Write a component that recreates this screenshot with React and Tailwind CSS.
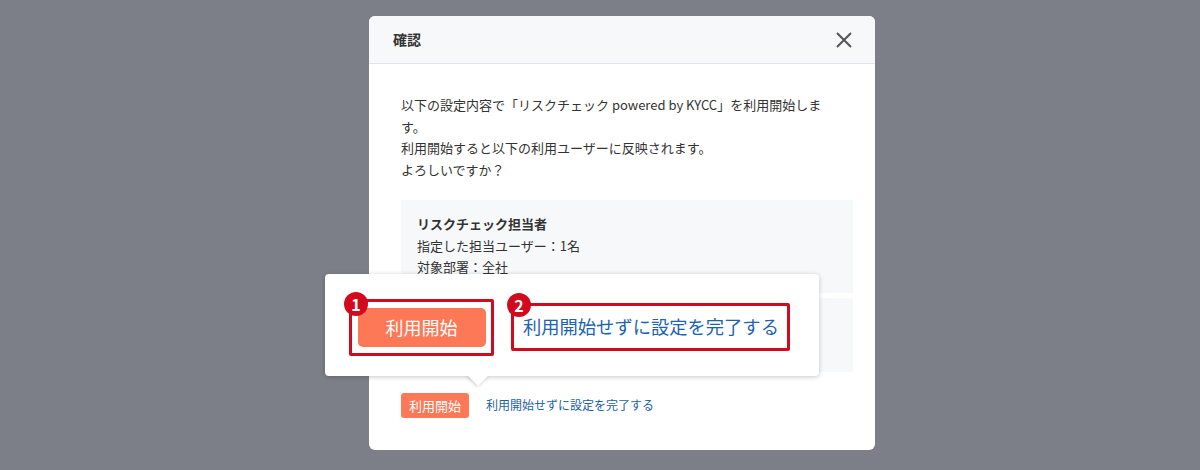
export default function App() {
  const font = { fontFamily: '"Noto Sans CJK JP", "Noto Sans", sans-serif' };
  return (
    <div className="w-[1200px] h-[470px] bg-[#7c7f87] overflow-hidden pt-4 pl-[369px]" style={font}>
      <div className="relative w-[506px] h-[434px] bg-white rounded-[6px]">
        <div className="h-[48px] flex items-center justify-between pl-6 pr-[22px] bg-[#f7f8fa] border-b border-[#e2e4e8] rounded-t-[6px]">
          <span className="text-[14px] font-bold text-[#333]">確認</span>
          <svg width="18" height="18" viewBox="0 0 18 18" className="text-[#555]">
            <path d="M2 2 L16 16 M16 2 L2 16" stroke="currentColor" strokeWidth="2" fill="none" />
          </svg>
        </div>
        <div className="pl-8 pr-[22px] pt-[30px] pb-8">
          <p className="text-[13px] leading-[21.5px] text-[#333]">
            以下の設定内容で「リスクチェック powered by KYCC」を利用開始しま<br />す。<br />
            利用開始すると以下の利用ユーザーに反映されます。<br />よろしいですか？
          </p>
          <div className="mt-[20px] bg-[#f7f8fa] px-4 pt-[13px] pb-[15px] text-[13px] leading-[21.5px] text-[#333]">
            <div className="font-bold">リスクチェック担当者</div>
            <div>指定した担当ユーザー：1名</div>
            <div>対象部署：全社</div>
          </div>
          <div className="mt-[5px] bg-[#f7f8fa] h-[74px]"></div>
          <div className="mt-[21px] flex items-center gap-[17px]">
            <button className="h-[25px] px-[8px] rounded-[3px] bg-[#fd7856] text-white text-[13px] leading-none">利用開始</button>
            <span className="text-[12px] text-[#1d5fa6]">利用開始せずに設定を完了する</span>
          </div>
        </div>

        <div className="absolute left-[-44px] top-[258px] w-[494px] h-[102px] bg-white rounded-[4px] shadow-[0_1px_5px_rgba(0,0,0,0.22)] flex items-start pl-6 pt-[25px] gap-[17px]">
          <div className="relative h-[57px] w-[145px] border-[3px] border-[#d20a1e] rounded-[2px] flex items-center justify-center">
            <span className="absolute left-[-8px] top-[-10px] w-[24px] h-[24px] rounded-full bg-[#d20a1e] text-white text-[16px] font-bold flex items-center justify-center leading-none">1</span>
            <div className="w-[128px] h-[39px] rounded-[5px] bg-[#fd7856] text-white text-[18px] flex items-center justify-center">利用開始</div>
          </div>
          <div className="relative mt-[4px] h-[48px] w-[279px] border-[3px] border-[#d20a1e] rounded-[2px] flex items-center pl-[9px]">
            <span className="absolute left-[-7px] top-[-13px] w-[24px] h-[24px] rounded-full bg-[#d20a1e] text-white text-[16px] font-bold flex items-center justify-center leading-none">2</span>
            <span className="text-[18.3px] text-[#1d63ad] whitespace-nowrap">利用開始せずに設定を完了する</span>
          </div>
          <div className="absolute top-full left-[139px] w-[28px] h-[12px] overflow-hidden">
            <div className="absolute left-[7px] top-[-7px] w-[14px] h-[14px] bg-white rotate-45 shadow-[0_1px_4px_rgba(0,0,0,0.22)]"></div>
          </div>
        </div>
      </div>
    </div>
  );
}
